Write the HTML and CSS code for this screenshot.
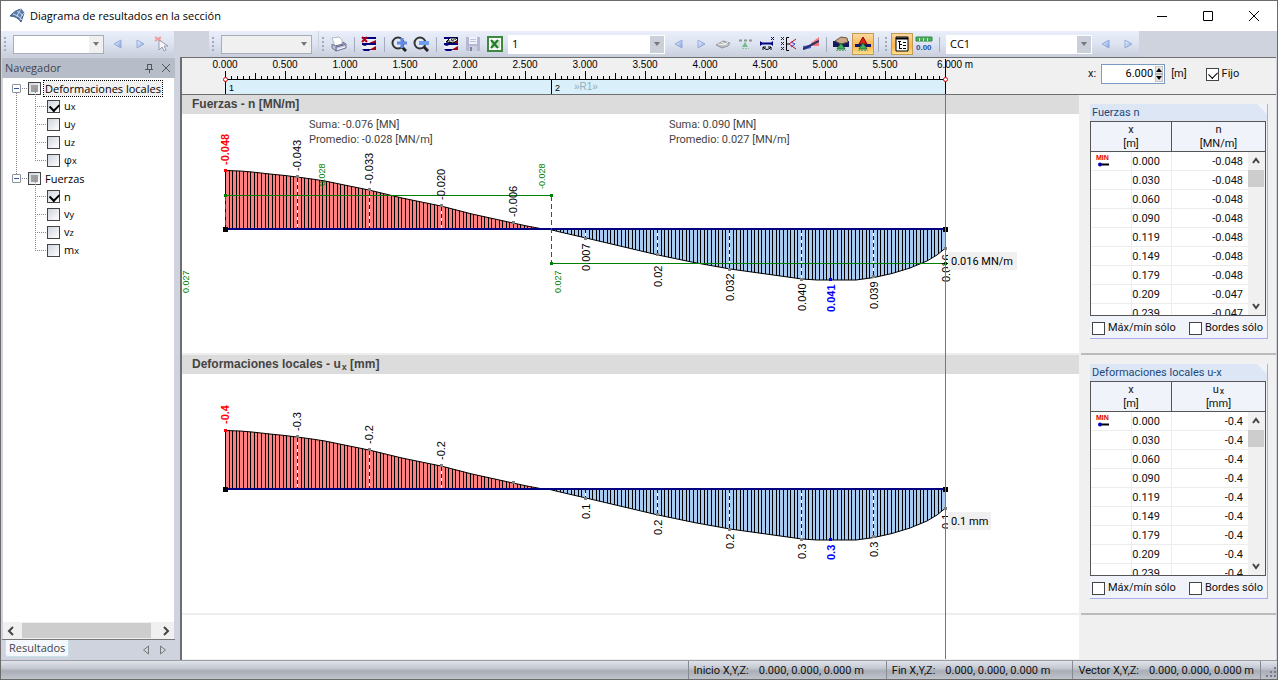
FILE: index.html
```html
<!DOCTYPE html>
<html lang="es">
<head>
<meta charset="utf-8">
<title>Diagrama de resultados en la sección</title>
<link rel="stylesheet" href="styles.css">
</head>
<body>
<svg class="defs" width="0" height="0" aria-hidden="true">
  <defs>
    <pattern id="hatch" x="43" y="0" width="18" height="10" patternUnits="userSpaceOnUse">
      <path d="M0 0h1v10h-1zM4 0h1v10h-1zM7 0h1v10h-1zM11 0h1v10h-1zM14 0h1v10h-1z" fill="#000"/>
    </pattern>
    <pattern id="ticks" x="43" y="0" width="60" height="22" patternUnits="userSpaceOnUse">
      <path d="M0 13h1v8h-1zM30 15h1v6h-1zM6 18h1v3h-1zM12 18h1v3h-1zM18 18h1v3h-1zM24 18h1v3h-1zM36 18h1v3h-1zM42 18h1v3h-1zM48 18h1v3h-1zM54 18h1v3h-1z" fill="#000"/>
    </pattern>
    <path id="neg" d="M43.500 115V56.500L58 57L70 58L88 60L103 61.500L115 63L130 65L143 67L160 70.500L187 76L220 84L259 92L290 100L331 109L345 112L361 115Z"/>
    <path id="pos" d="M366 115L378 118L404 124L440 132.500L476 141L512 148.500L548 155L584 160L620 165L635 166H674L692 163.500L710 159.500L728 154L745 147L755 141L763.500 134V115Z"/>
    <g id="curve">
      <use href="#neg" fill="#ff8080"/>
      <use href="#pos" fill="#a6caf0"/>
      <use href="#neg" fill="url(#hatch)" stroke="#000"/>
      <use href="#pos" fill="url(#hatch)" stroke="#000"/>
      <g stroke="#fff"><path d="M115.500 64V115M187.500 77V115M259.500 93V115M331.500 110V115M403.500 115V123M475.500 115V140M547.500 115V154M619.500 115V164M691.500 115V162"/></g>
      <g stroke="#000080" stroke-dasharray="4 3"><path d="M115.500 64V115M187.500 77V115M259.500 93V115M331.500 110V115M403.500 115V123M475.500 115V140M547.500 115V154M619.500 115V164M691.500 115V162"/></g>
      <path d="M43.500 115H764" stroke="#000080" stroke-width="2"/>
      <path d="M41 113h5v5h-5zM761 113h5v5h-5z" fill="#000"/>
      <path d="M114 61h3v3h-3zM186 74h3v3h-3zM258 90h3v3h-3zM330 107h3v3h-3zM402 123h3v3h-3zM474 139h3v3h-3zM546 154h3v3h-3zM618 164h3v3h-3zM690 161h3v3h-3zM762 133h3v3h-3z" fill="#808080"/>
      <path d="M42 55h3v3h-3z" fill="#f00"/>
      <path d="M647 164h3v3h-3z" fill="#00f"/>
    </g>
    <linearGradient id="tri" x1="0" y1="0" x2="1" y2="1"><stop offset="0" stop-color="#f4f8ff"/><stop offset="1" stop-color="#7f9fe0"/></linearGradient>
    <symbol id="i-prev" viewBox="0 0 16 16"><path d="M11 4v8L4 8z" fill="url(#tri)" stroke="#95abdc"/></symbol>
    <symbol id="i-next" viewBox="0 0 16 16"><path d="M5 4v8l7-4z" fill="url(#tri)" stroke="#95abdc"/></symbol>
    <symbol id="i-print" viewBox="0 0 16 16">
      <path d="M1 2L8 1 11 4 11 9 4 10z" fill="#fff" stroke="#b4b8c8"/>
      <path d="M1 8L4 10 12 8 12 6 15 8 15 12 5 15 1 12z" fill="#c3c5e0" stroke="#6e7190"/>
      <path d="M5 11L14 8.500M5 11V15" stroke="#5d6080" fill="none"/>
      <path d="M6 13.500L14 11" stroke="#fff"/>
    </symbol>
    <symbol id="i-result" viewBox="0 0 16 16">
      <path d="M1 1H15V7H1zM1 8H15V14H1z" fill="#eef0f6"/>
      <path d="M1 1H15V3H1zM1 7H15V9H6L4 10 1 9z" fill="#000080"/>
      <path d="M15 4V7H8zM15 10V14H8z" fill="#a00010"/>
      <path d="M1 13H10L8 15H3z" fill="#000080"/>
    </symbol>
    <symbol id="i-lens" viewBox="0 0 16 16"><circle cx="7" cy="7" r="5.500" fill="#e3e8f8" stroke="#333" stroke-width="2"/><path d="M11 11l4 4" stroke="#222" stroke-width="3"/></symbol>
    <symbol id="i-support" viewBox="0 0 16 16"><path d="M8 7L12 13H4z" fill="#42b35c" stroke="#226e38"/><path d="M3 14.500H13" stroke="#5fae73" stroke-dasharray="2 1"/></symbol>
  </defs>
</svg>

<div class="window">
  <header class="titlebar">
    <svg class="logo" width="16" height="16" viewBox="0 0 16 16"><path d="M1 8Q6 2 12 1L15 5 12 14Q8 8 1 8z" fill="#5c7fae" stroke="#425b82"/><path d="M4 6Q10 7 13 12M8 3Q12 5 14 8M12 1Q9 4 8 9M15 5Q12 7 11 12" stroke="#c4d6ee" fill="none"/></svg>
    <h1>Diagrama de resultados en la sección</h1>
    <div class="winbtns">
      <button aria-label="Minimizar"><svg width="12" height="12"><path d="M1 6.500H11" stroke="#000"/></svg></button>
      <button aria-label="Maximizar"><svg width="12" height="12"><path d="M1.500 1.500h9v9h-9z" fill="none" stroke="#000"/></svg></button>
      <button aria-label="Cerrar"><svg width="12" height="12"><path d="M1 1l10 10M11 1L1 11" stroke="#000"/></svg></button>
    </div>
  </header>

  <div class="toolbar" role="toolbar" aria-label="Herramientas">
    <div class="group first">
      <i class="grip"></i>
      <span class="combo short"><select aria-label="Vista"><option></option></select></span>
      <button aria-label="Anterior"><svg width="16" height="16"><use href="#i-prev"/></svg></button>
      <button aria-label="Siguiente"><svg width="16" height="16"><use href="#i-next"/></svg></button>
      <button aria-label="Seleccionar"><svg width="16" height="16" viewBox="0 0 16 16"><path d="M1 1l6 4M7 1L1 5" stroke="#f09a9a" stroke-width="2"/><path d="M5 4v10l3-3 2 4 2-1-2-4h4z" fill="#f8f8fc" stroke="#9a9aac"/></svg></button>
    </div>
    <div class="group second">
      <i class="grip"></i>
      <span class="combo short off"><select aria-label="Filtro" disabled><option></option></select></span>
    </div>
    <div class="group">
      <i class="grip"></i>
      <button aria-label="Imprimir"><svg width="16" height="16"><use href="#i-print"/></svg></button>
      <i class="sep"></i>
      <button aria-label="Borrar resultados"><svg width="16" height="16"><use href="#i-result"/><path d="M1 1l5 5M6 1L1 6" stroke="#b00020" stroke-width="2"/></svg></button>
      <i class="sep"></i>
      <button aria-label="Acercar"><svg width="16" height="16"><use href="#i-lens"/><path d="M11 2v10M6 7h10" stroke="#5f8be6" stroke-width="3"/></svg></button>
      <button aria-label="Alejar"><svg width="16" height="16"><use href="#i-lens"/><path d="M6 7h10" stroke="#6c9fe8" stroke-width="4"/></svg></button>
      <i class="sep"></i>
      <button aria-label="Suavizar"><svg width="16" height="16"><use href="#i-result"/><path d="M3 6L7 2 13 2 15 4 10 7z" fill="#fff" stroke="#000"/><path d="M4 6L12 3M7 7L13 3M5 4l4 3M8 3l3 3" stroke="#000" stroke-dasharray="1 1"/></svg></button>
      <button aria-label="Guardar"><svg width="16" height="16"><path d="M1 1h14v14H2L1 14z" fill="#b5b8d2"/><path d="M4 1h8v7H4z" fill="#f2f3fa"/><path d="M5 3.500h6M5 5.500h6" stroke="#c0c2d6"/><path d="M4 10h8v5H4z" fill="#cdcfe0"/><path d="M5 11h2v4H5z" fill="#7d81a6"/></svg></button>
      <button aria-label="Exportar a Excel"><svg width="16" height="16"><path d="M1 1h14v14H1z" fill="#fff" stroke="#3b8a3d" stroke-width="2"/><path d="M4 4h9v8H4z" fill="#c5e5c2"/><path d="M4 4l7 8M11 4l-7 8" stroke="#217a2b" stroke-width="2"/></svg></button>
      <span class="combo long"><select aria-label="Sección"><option>1</option></select></span>
      <button aria-label="Sección anterior"><svg width="16" height="16"><use href="#i-prev"/></svg></button>
      <button aria-label="Sección siguiente"><svg width="16" height="16"><use href="#i-next"/></svg></button>
      <button aria-label="Superficies"><svg width="16" height="16"><path d="M1 9l7-4 7 2-2 3-6 2z" fill="#b9bbbf" stroke="#9799a0"/><path d="M3 8l6 1 4-3M6 6l6 3" stroke="#f2f2f2" fill="none"/></svg></button>
      <button aria-label="Apoyos"><svg width="16" height="16"><path d="M2 4.500H15" stroke="#8a9c8c" stroke-width="2" stroke-dasharray="3 2"/><path d="M8 6l3 5H5z" fill="#6fbf83"/><path d="M5 12.500h7" stroke="#93c29d" stroke-dasharray="2 1"/></svg></button>
      <button aria-label="Barra"><svg width="16" height="16"><path d="M1 7.500H14" stroke="#000080" stroke-width="2"/><path d="M1 5v5l3-2.500zM14 5v5l-3-2.500z" fill="#000080"/><path d="M12 1l3 3M15 1l-3 3" stroke="#000080"/><path d="M4 11q4 5 8 0M12 14v-3h-3M4 14v-3h3" fill="none" stroke="#000"/></svg></button>
      <button aria-label="Ejes"><svg width="16" height="16"><path d="M0 1l3 3M3 1l-3 3M0 6l3 3M3 6l-3 3M0 11l3 3M3 11l-3 3" stroke="#222"/><path d="M8 1.500H5.500v13H8M5.500 8H8" stroke="#000" fill="none"/><path d="M15 3L8 8l7 5" fill="none" stroke="#e00018"/><path d="M10 6l4 2-4 3" fill="none" stroke="#3146c8"/></svg></button>
      <button aria-label="Distribución"><svg width="16" height="16"><path d="M0 10L8 9v3L0 14z" fill="#4a5ac0"/><path d="M8 7L16 1v9H8z" fill="#f47878"/><path d="M0 13L16 5" stroke="#22306e" stroke-width="2"/></svg></button>
      <i class="sep"></i>
      <button aria-label="Mostrar sección"><svg width="16" height="16"><path d="M0 5h16v6H0z" fill="#111a5c"/><path d="M2 5L8 1l6 1 1 4-7 2z" fill="#c9aa88" stroke="#6e563c"/><use href="#i-support"/></svg></button>
      <button class="on" aria-label="Apoyo activo"><svg width="16" height="16"><path d="M0 8h16v3H0z" fill="#10186e"/><path d="M8 1l4 7H4z" fill="#e02018" stroke="#7a0c08"/><use href="#i-support"/></svg></button>
      <i class="sep"></i>
    </div>
    <div class="group">
      <i class="grip"></i>
      <button class="on" aria-label="Tabla"><svg width="16" height="16"><path d="M2 1h12v14H2z" fill="#fff" stroke="#000"/><path d="M2 2.500h12" stroke="#000" stroke-width="2"/><path d="M4 5.500h3M5.500 5v8M6 8.500h2M6 12.500h2M9 6.500h3M9 9.500h3M9 12.500h3" stroke="#000"/></svg></button>
      <button aria-label="Valores"><svg width="18" height="16"><path d="M1 1h16v4H1z" fill="#4fae5c" stroke="#2f8a40"/><path d="M4.500 2v3M8.500 2v3M12.500 2v3" stroke="#c8efcc"/><text x="1" y="14" class="mini">0.00</text></svg></button>
      <i class="sep"></i>
      <span class="combo mid"><select aria-label="Caso de carga"><option>CC1</option></select></span>
      <button aria-label="Caso anterior"><svg width="16" height="16"><use href="#i-prev"/></svg></button>
      <button aria-label="Caso siguiente"><svg width="16" height="16"><use href="#i-next"/></svg></button>
    </div>
  </div>

  <div class="body">
    <nav class="sidebar" aria-label="Navegador">
      <div class="navhead"><h2>Navegador</h2>
        <button aria-label="Anclar"><svg width="10" height="10"><path d="M3 1.500h5M3.500 1v5M7.500 1v5M1 6.500h8M5.500 7v3" stroke="#555"/></svg></button>
        <button aria-label="Cerrar navegador"><svg width="10" height="10"><path d="M1 1l8 8M9 1L1 9" stroke="#555"/></svg></button>
      </div>
      <ul class="tree">
        <li class="root"><div class="row"><button class="exp" aria-label="Contraer"></button><input type="checkbox" class="part" id="g1"><label for="g1" class="focus">Deformaciones locales</label></div>
          <ul>
            <li><input type="checkbox" id="ux" checked><label for="ux">u<small>x</small></label></li>
            <li><input type="checkbox" id="uy"><label for="uy">u<small>y</small></label></li>
            <li><input type="checkbox" id="uz"><label for="uz">u<small>z</small></label></li>
            <li><input type="checkbox" id="px"><label for="px">φ<small>x</small></label></li>
          </ul></li>
        <li class="root"><div class="row"><button class="exp" aria-label="Contraer"></button><input type="checkbox" class="part" id="g2"><label for="g2">Fuerzas</label></div>
          <ul>
            <li><input type="checkbox" id="n" checked><label for="n">n</label></li>
            <li><input type="checkbox" id="vy"><label for="vy">v<small>y</small></label></li>
            <li><input type="checkbox" id="vz"><label for="vz">v<small>z</small></label></li>
            <li><input type="checkbox" id="mx"><label for="mx">m<small>x</small></label></li>
          </ul></li>
      </ul>
      <div class="hscroll"><svg width="16" height="16"><path d="M10 4L6 8l4 4" fill="none" stroke="#444" stroke-width="2"/></svg><i></i><svg width="16" height="16"><path d="M6 4l4 4-4 4" fill="none" stroke="#444" stroke-width="2"/></svg></div>
      <div class="tabs"><button class="tab">Resultados</button><button class="step" aria-label="Pestaña anterior"><svg width="10" height="10"><path d="M7.500 1v8L2.500 5z" fill="none" stroke="#777"/></svg></button><button class="step" aria-label="Pestaña siguiente"><svg width="10" height="10"><path d="M2.500 1v8l5-4z" fill="none" stroke="#777"/></svg></button></div>
    </nav>

    <main>
      <div class="top">
        <svg class="ruler" height="36">
          <rect x="43" y="22" width="721" height="14" fill="#d9f0fa"/>
          <rect x="43" y="0" width="721" height="22" fill="url(#ticks)"/>
          <path d="M43 21.500H764M43.500 21V36M369.500 22V36M763.500 1V36" stroke="#000"/>
          <g fill="#fff" stroke="#e00000"><circle cx="43.500" cy="21.500" r="2"/><circle cx="763.500" cy="21.500" r="2"/></g>
          <g class="scale">
            <text x="43" y="10">0.000</text><text x="103" y="10">0.500</text><text x="163" y="10">1.000</text><text x="223" y="10">1.500</text><text x="283" y="10">2.000</text><text x="343" y="10">2.500</text><text x="403" y="10">3.000</text><text x="463" y="10">3.500</text><text x="523" y="10">4.000</text><text x="583" y="10">4.500</text><text x="643" y="10">5.000</text><text x="703" y="10">5.500</text><text x="773" y="10">6.000 m</text>
          </g>
          <g class="seg"><text x="47" y="33">1</text><text x="373" y="33">2</text><text x="392" y="32" class="rep">»R1»</text></g>
        </svg>
        <div class="xbox"><label for="xpos">x:</label><span class="spin"><input id="xpos" type="text" value="6.000"><svg width="8" height="16"><path d="M0 0h8v8H0zM0 8h8v8H0z" fill="#e6e6e6" stroke="#aaa"/><path d="M4 2l3 4H1zM4 14l3-4H1z" fill="#000"/></svg></span><span class="unit">[m]</span><input type="checkbox" class="thin" id="fijo" checked><label for="fijo">Fijo</label></div>
      </div>

      <div class="content">
        <div class="charts">
          <section>
            <h3>Fuerzas - n [MN/m]</h3>
            <svg class="plot" height="239">
              <use href="#curve"/>
              <g fill="none" stroke="#008000"><path d="M43 81.500H369M369 149.500H763"/><path d="M43.500 82V113M369.500 82V149" stroke-dasharray="5 3"/></g>
              <path d="M42 80h3v3h-3zM368 80h3v3h-3zM368 148h3v3h-3zM762 148h3v3h-3z" fill="#008000"/>
              <g class="info"><text x="127" y="14">Suma: -0.076 [MN]</text><text x="127" y="29">Promedio: -0.028 [MN/m]</text><text x="487" y="14">Suma: 0.090 [MN]</text><text x="487" y="29">Promedio: 0.027 [MN/m]</text></g>
              <g class="avg"><text transform="translate(143 75) rotate(-90)">-0.028</text><text transform="translate(363 75) rotate(-90)">-0.028</text><text transform="translate(7 179) rotate(-90)">0.027</text><text transform="translate(379 179) rotate(-90)">0.027</text></g>
              <g class="val"><text class="min" transform="translate(47 51) rotate(-90)">-0.048</text><text transform="translate(119 57) rotate(-90)">-0.043</text><text transform="translate(191 70) rotate(-90)">-0.033</text><text transform="translate(263 86) rotate(-90)">-0.020</text><text transform="translate(335 103) rotate(-90)">-0.006</text><text transform="translate(408 157) rotate(-90)">0.007</text><text transform="translate(480 173) rotate(-90)">0.02</text><text transform="translate(552 187) rotate(-90)">0.032</text><text transform="translate(624 197) rotate(-90)">0.040</text><text class="max" transform="translate(653 198) rotate(-90)">0.041</text><text transform="translate(696 195) rotate(-90)">0.039</text><text transform="translate(768 168) rotate(-90)">0.016</text></g>
              <rect x="766" y="138" width="69" height="18" fill="#f0f0f0"/><text class="tip" x="769" y="151">0.016 MN/m</text>
            </svg>
          </section>
          <section>
            <h3>Deformaciones locales - u<small>x</small> [mm]</h3>
            <svg class="plot" height="239">
              <use href="#curve"/>
              <g class="val"><text class="min" transform="translate(47 50) rotate(-90)">-0.4</text><text transform="translate(119 57) rotate(-90)">-0.3</text><text transform="translate(191 70) rotate(-90)">-0.2</text><text transform="translate(263 86) rotate(-90)">-0.2</text><text transform="translate(408 145) rotate(-90)">0.1</text><text transform="translate(480 161) rotate(-90)">0.2</text><text transform="translate(552 175) rotate(-90)">0.2</text><text transform="translate(624 185) rotate(-90)">0.3</text><text class="max" transform="translate(653 186) rotate(-90)">0.3</text><text transform="translate(696 183) rotate(-90)">0.3</text><text transform="translate(768 155) rotate(-90)">0.1</text></g>
              <rect x="766" y="138" width="43" height="18" fill="#f0f0f0"/><text class="tip" x="769" y="151">0.1 mm</text>
            </svg>
          </section>
          <i class="cursor"></i>
        </div>

        <aside class="panel">
          <section>
            <div class="box">
              <h3>Fuerzas n</h3>
              <div class="grid">
                <table>
                  <thead><tr><th colspan="2">x<br>[m]</th><th>n<br>[MN/m]</th></tr></thead>
                  <tbody>
                    <tr><td><svg width="14" height="15"><text x="0" y="6" class="minmark">MIN</text><path d="M3 10.500h10" stroke="#000" stroke-width="2"/><circle cx="4" cy="10.500" r="2" fill="#0000c0"/></svg></td><td>0.000</td><td>-0.048</td></tr>
                    <tr><td></td><td>0.030</td><td>-0.048</td></tr>
                    <tr><td></td><td>0.060</td><td>-0.048</td></tr>
                    <tr><td></td><td>0.090</td><td>-0.048</td></tr>
                    <tr><td></td><td>0.119</td><td>-0.048</td></tr>
                    <tr><td></td><td>0.149</td><td>-0.048</td></tr>
                    <tr><td></td><td>0.179</td><td>-0.048</td></tr>
                    <tr><td></td><td>0.209</td><td>-0.047</td></tr>
                    <tr><td></td><td>0.239</td><td>-0.047</td></tr>
                  </tbody>
                </table>
                <div class="vscroll"><svg width="16" height="18"><path d="M5 11l3-4 3 4" fill="none" stroke="#444" stroke-width="2"/></svg><i></i><svg width="16" height="18"><path d="M5 7l3 4 3-4" fill="none" stroke="#444" stroke-width="2"/></svg></div>
              </div>
              <div class="opts"><input type="checkbox" class="thin" id="m1"><label for="m1">Máx/mín sólo</label><input type="checkbox" class="thin" id="b1"><label for="b1">Bordes sólo</label></div>
            </div>
          </section>
          <section>
            <div class="box">
              <h3>Deformaciones locales u-x</h3>
              <div class="grid">
                <table>
                  <thead><tr><th colspan="2">x<br>[m]</th><th>u<small>x</small><br>[mm]</th></tr></thead>
                  <tbody>
                    <tr><td><svg width="14" height="15"><text x="0" y="6" class="minmark">MIN</text><path d="M3 10.500h10" stroke="#000" stroke-width="2"/><circle cx="4" cy="10.500" r="2" fill="#0000c0"/></svg></td><td>0.000</td><td>-0.4</td></tr>
                    <tr><td></td><td>0.030</td><td>-0.4</td></tr>
                    <tr><td></td><td>0.060</td><td>-0.4</td></tr>
                    <tr><td></td><td>0.090</td><td>-0.4</td></tr>
                    <tr><td></td><td>0.119</td><td>-0.4</td></tr>
                    <tr><td></td><td>0.149</td><td>-0.4</td></tr>
                    <tr><td></td><td>0.179</td><td>-0.4</td></tr>
                    <tr><td></td><td>0.209</td><td>-0.4</td></tr>
                    <tr><td></td><td>0.239</td><td>-0.4</td></tr>
                  </tbody>
                </table>
                <div class="vscroll"><svg width="16" height="18"><path d="M5 11l3-4 3 4" fill="none" stroke="#444" stroke-width="2"/></svg><i></i><svg width="16" height="18"><path d="M5 7l3 4 3-4" fill="none" stroke="#444" stroke-width="2"/></svg></div>
              </div>
              <div class="opts"><input type="checkbox" class="thin" id="m2"><label for="m2">Máx/mín sólo</label><input type="checkbox" class="thin" id="b2"><label for="b2">Bordes sólo</label></div>
            </div>
          </section>
        </aside>
      </div>
    </main>
  </div>

  <footer class="status">
    <div><span>Inicio X,Y,Z:</span><span>0.000, 0.000, 0.000 m</span></div>
    <div><span>Fin X,Y,Z:</span><span>0.000, 0.000, 0.000 m</span></div>
    <div><span>Vector X,Y,Z:</span><span>0.000, 0.000, 0.000 m</span></div>
    <div class="size"><svg width="12" height="12"><path d="M8 0h2v2H8zM4 4h2v2H4zM8 4h2v2H8zM0 8h2v2H0zM4 8h2v2H4zM8 8h2v2H8z" fill="#777c88"/></svg></div>
  </footer>
</div>
</body>
</html>
```
FILE: styles.css
```css
* { box-sizing: border-box; }
body { margin: 0; font: 11px/14px "Roboto", "Liberation Sans", sans-serif; color: #111; }
h1, h2, h3, ul { margin: 0; padding: 0; font-weight: normal; list-style: none; }
button { border: 0; padding: 0; background: none; font: inherit; color: inherit; }
svg { display: block; flex: none; }
.defs { position: absolute; }
.window { height: 100vh; display: flex; flex-direction: column; border: 1px solid #6b6b6b; background: #cfd3dd; }

.titlebar { display: flex; align-items: center; height: 30px; background: #fff; padding-left: 8px; flex: none; }
h1 { font: 11px/16px "Open Sans", sans-serif; color: #000; margin-left: 5px; flex: 1; }
.winbtns { display: flex; }
.winbtns button { width: 46px; height: 28px; display: grid; place-items: center; }

.toolbar { display: flex; height: 26px; flex: none; }
.group { display: flex; align-items: center; background: linear-gradient(#e9eefa, #dde3f0 50%, #c8cedb); }
.first { width: 173px; margin-right: 35px; }
.second { width: 109px; margin-right: 1px; }
.grip { width: 9px; height: 15px; flex: none; background: repeating-linear-gradient(#a5aab8 0 2px, transparent 2px 4px) 3px 0 / 2px 15px no-repeat; }
.first .grip, .second .grip { width: 12px; }
.sep { width: 8px; height: 15px; flex: none; background: linear-gradient(#a5abba, #a5abba) 4px 0 / 1px 15px no-repeat; }
.group button { width: 22px; height: 22px; display: grid; place-items: center; flex: none; }
.group button.on { border: 1px solid #c29b55; background: linear-gradient(#fbd9a0, #fdb44c 60%, #ffe08a); }
.first .combo + button { margin-left: 3px; }
.combo { position: relative; display: flex; height: 19px; }
.combo select { appearance: none; width: 100%; height: 19px; border: 1px solid #fff; border-radius: 0; background: #fff; padding: 0 3px; font: 11px/16px "Open Sans", sans-serif; color: #000; opacity: 1; }
.short { width: 91px; }
.combo.short select { border-color: #a9adb5; }
.combo.off select { background: #f0f0f0; }
.long { width: 157px; margin: 0 3px 0 2px; }
.mid { width: 146px; margin: 0 3px 0 3px; }
.combo::after { content: ""; position: absolute; right: 1px; top: 1px; width: 14px; height: 17px; background: #f0f0f0; }
.long::after, .mid::after { background: #cacfda; }
.combo::before { content: ""; position: absolute; z-index: 1; right: 5px; top: 7px; border: 3px solid transparent; border-top: 4px solid #777; border-bottom: 0; }
.mini { font: bold 8px "Liberation Sans", sans-serif; fill: #2850a8; }

.body { flex: 1; display: flex; min-height: 0; }
.sidebar { width: 173px; margin: 1px 5px 0 1px; display: flex; flex-direction: column; flex: none; }
.navhead { display: flex; align-items: center; gap: 7px; height: 20px; padding: 0 4px 0 3px; background: #b6bcc8; }
h2, .tab { font: 11px/14px "Open Sans", sans-serif; color: #3f4550; }
h2 { flex: 1; }
.tree { flex: 1; background: #fff; margin: 0 1px; padding: 1px 0 0 9px; }
.tree li, .row { position: relative; }
.row, .tree li li { display: flex; align-items: center; height: 18px; }
.tree label { font: 11px/15px "Open Sans", sans-serif; color: #000; margin-left: 3px; padding: 0 1px; }
.tree .focus { background: #f0f0f0; outline: 1px dotted #000; }
.tree li li { padding-left: 12px; }
.tree ul { margin-left: 23px; }
.tree li li::before { content: ""; position: absolute; left: 0; top: -9px; width: 10px; height: 18px; border: dotted #888; border-width: 0 0 1px 1px; }
.root + .root::before { content: ""; position: absolute; left: 4px; top: -77px; height: 82px; border-left: 1px dotted #888; }
.exp { width: 9px; height: 9px; border: 1px solid #8a93a0; border-radius: 1px; background: linear-gradient(#3355a0, #3355a0) 1px 3px / 5px 1px no-repeat #fff; margin-right: 7px; }
.row .exp::after { content: ""; position: absolute; left: 10px; top: 9px; width: 5px; border-top: 1px dotted #888; }
input[type=checkbox] { appearance: none; position: relative; width: 13px; height: 13px; flex: none; margin: 0; border: 1px solid #444; background: linear-gradient(135deg, #d0d5de, #fff); }
input[type=checkbox]:checked::after { content: ""; position: absolute; left: 3px; top: 1px; width: 5px; height: 7px; border: solid #000; border-width: 0 2px 2px 0; transform: rotate(45deg); }
input.part::before { content: ""; position: absolute; left: 2px; top: 2px; width: 7px; height: 7px; background: #a0a0a0; }
input[type=checkbox].thin { background: #fff; }
input[type=checkbox].thin:checked::after { border-width: 0 1px 1px 0; }
.hscroll { display: flex; height: 17px; margin: 0 1px; background: #f0f0f0; align-items: center; }
.hscroll i { flex: 1; height: 15px; background: #cdcdcd; margin: 0 7px 0 3px; }
.tabs { display: flex; align-items: flex-start; height: 21px; border-top: 1px solid #777; padding-left: 3px; }
.tab { height: 17px; padding: 0 3px; background: #f4f7fb; border-radius: 0 0 3px 3px; border: 1px solid #c5e2ea; border-top: 0; margin-right: auto; }
.step { height: 20px; display: grid; place-items: center; margin-right: 7px; }

main { flex: 1; min-width: 0; display: flex; flex-direction: column; background: #f0f0f0; border-left: 2px solid #6e6e6e; border-top: 1px solid #6e6e6e; margin-right: 1px; }
.top { display: flex; height: 37px; border-bottom: 1px solid #6e6e6e; flex: none; }
.ruler { flex: 1; min-width: 0; }
.scale { font: 10px "Liberation Sans", sans-serif; text-anchor: middle; }
.seg { font: 9px "Liberation Sans", sans-serif; }
.rep { font-size: 10px; fill: #93adba; }
.xbox { display: flex; align-items: center; width: 197px; padding: 0 0 4px 9px; flex: none; }
.spin { display: flex; align-items: center; width: 64px; height: 20px; margin: 0 6px 0 5px; border: 1px solid #7a9cc4; background: #fff; padding-right: 1px; }
.spin input { flex: 1; min-width: 0; border: 0; padding: 0 2px; text-align: right; font: 11px/16px "Roboto", sans-serif; }
.unit { margin-right: 19px; }
.xbox input + label { margin-left: 3px; }

.content { flex: 1; display: flex; min-height: 0; }
.charts { flex: 1; min-width: 0; background: #fff; position: relative; border-bottom: 1px solid #f0f0f0; }
.charts section { border-bottom: 2px solid #eee; }
.charts h3 { height: 19px; padding-left: 10px; background: #dcdcdc; font: bold 12px/18px "Liberation Sans", sans-serif; color: #444; }
.charts small { font-size: 9px; margin-left: 1px; position: relative; top: 2px; }
.plot { width: 100%; }
.cursor { position: absolute; left: 763px; top: 0; bottom: 0; width: 1px; background: #777; }
.info { font: 11px "Roboto", sans-serif; fill: #444; }
.avg { font: 9px "Liberation Sans", sans-serif; fill: #008000; }
.val { font: 11px "Liberation Sans", sans-serif; }
.val .min { font-weight: bold; fill: #f00; }
.val .max { font-weight: bold; fill: #00f; }
.tip { font: 11px "Roboto", sans-serif; }

.panel { width: 197px; flex: none; padding-left: 2px; }
.panel section { height: 260px; padding: 9px 8px 0 9px; border-bottom: 2px solid #bbb; }
.box { border: solid #a9aee6; border-width: 0 1px 1px 0; background: #f0f4fa; }
.box h3 { height: 17px; padding-left: 2px; font-size: 11px; line-height: 17px; color: #1d4a7c; background: #dce6f5; clip-path: polygon(0 0, calc(100% - 10px) 0, 100% 10px, 100% 100%, 0 100%); }
.grid { position: relative; height: 195px; margin-right: 1px; border: 1px solid #555; overflow: hidden; background: #fff; }
table { width: 100%; border-collapse: separate; border-spacing: 0; table-layout: fixed; }
th { height: 30px; padding: 1px 0 0; font-weight: normal; line-height: 14px; background: #f0f4fa; border-bottom: 1px solid #555; width: 80px; }
th + th { border-left: 1px solid #555; width: auto; }
th small { font-size: 9px; margin-left: 1px; position: relative; top: 1px; }
td { height: 19px; padding: 2px 11px 0 0; text-align: right; border-bottom: 1px solid #ececec; line-height: 16px; }
td + td { border-left: 1px solid #ececec; }
td:first-child { padding: 0 0 0 5px; width: 20px; }
td:last-child { padding-right: 22px; }
.minmark { font: bold 7px "Liberation Sans", sans-serif; fill: #e00000; }
.vscroll { position: absolute; right: 0; top: 30px; bottom: 0; width: 17px; background: #f0f0f0; display: flex; flex-direction: column; }
.vscroll i { height: 17px; margin: 0 1px 0 0; background: #cdcdcd; }
.vscroll svg:last-child { margin-top: auto; }
.opts { display: flex; align-items: center; height: 22px; padding: 2px 0 0 2px; }
.opts label { margin-left: 3px; white-space: nowrap; }
.opts label + input { margin-left: auto !important; }
.opts label:last-child { margin-right: 4px; }

.status { display: flex; justify-content: flex-end; height: 19px; flex: none; border-top: 1px solid #9a9ea8; background: linear-gradient(#e0e3ea, #c4c8d1 40%, #a9adb6 55%, #bfc3cc); }
.status div { display: flex; gap: 10px; align-items: center; border-left: 1px solid #858a95; padding: 2px 22px 0 5px; }
.status div:nth-child(3) { padding-right: 6px; }
.status .size { width: 17px; padding: 6px 0 0 5px; }
```
